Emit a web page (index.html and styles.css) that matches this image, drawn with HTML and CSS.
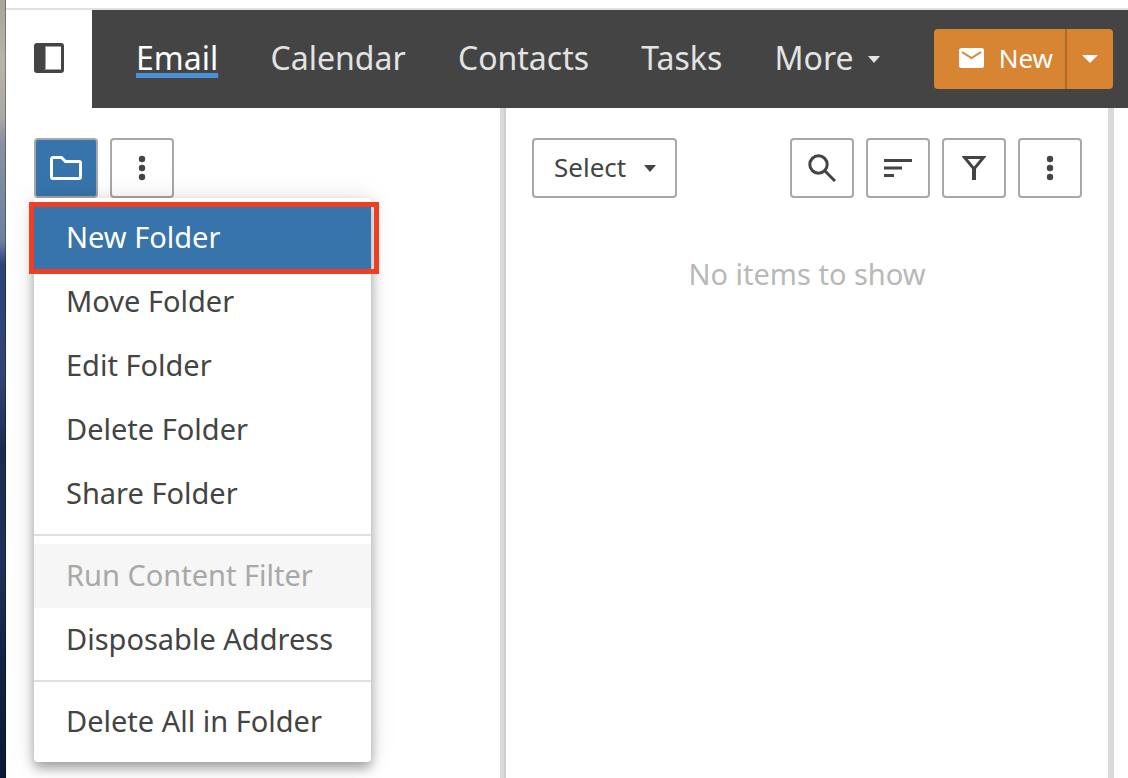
FILE: index.html
```html
<!DOCTYPE html>
<html lang="en">
<head>
    <meta charset="UTF-8">
    <meta name="viewport" content="width=device-width, initial-scale=1.0">
    <title>Email</title>
    <link rel="stylesheet" href="styles.css">
</head>
<body>
    <div class="desktop-edge"></div>
    <div class="app">
        <header class="header">
            <button class="sidebar-toggle" type="button" aria-label="Toggle sidebar">
                <svg width="30" height="30" viewBox="0 0 30 30">
                    <rect width="30" height="30" rx="3" fill="#444"/>
                    <rect x="11" y="3" width="16" height="24" fill="#a0a0a0"/>
                    <rect x="12" y="4" width="15" height="22" fill="#fff"/>
                </svg>
            </button>
            <div class="topbar">
                <nav class="tabs">
                    <a class="tab active" href="#">Email</a>
                    <a class="tab" href="#">Calendar</a>
                    <a class="tab" href="#">Contacts</a>
                    <a class="tab" href="#">Tasks</a>
                    <button class="tab more" type="button" aria-haspopup="true">More
                        <svg width="12" height="9" viewBox="0 0 12 9"><path d="M0 2h12L6 9z" fill="currentColor"/></svg>
                    </button>
                </nav>
                <div class="new-group">
                    <button class="new-button" type="button">
                        <svg width="25" height="20" viewBox="0 0 25 20">
                            <rect width="25" height="20" rx="2.5" fill="#fff"/>
                            <path d="M3 4l9.500 6L22 4" fill="none" stroke="#d78532" stroke-width="2"/>
                        </svg>
                        New
                    </button>
                    <button class="new-caret" type="button" aria-label="New options">
                        <svg width="16" height="8" viewBox="0 0 16 8"><path d="M0 0h16L8 8z" fill="#fff"/></svg>
                    </button>
                </div>
            </div>
        </header>

        <main class="panes">
            <section class="folders">
                <div class="toolbar">
                    <button class="tool selected" type="button" aria-label="Folder actions">
                        <svg width="32" height="24" viewBox="0 0 32 24">
                            <path d="M3 1.500h8.500l4 4H29a1.500 1.500 0 0 1 1.500 1.500v14a1.500 1.500 0 0 1-1.500 1.500H3A1.500 1.500 0 0 1 1.500 21V3A1.500 1.500 0 0 1 3 1.500z" fill="none" stroke="#fff" stroke-width="3"/>
                        </svg>
                    </button>
                    <button class="tool" type="button" aria-label="More actions">
                        <svg width="8" height="26" viewBox="0 0 8 26" fill="#444">
                            <circle cx="4" cy="4" r="3.200"/><circle cx="4" cy="13" r="3.200"/><circle cx="4" cy="22" r="3.200"/>
                        </svg>
                    </button>
                </div>
                <div class="menu" role="menu">
                    <button class="menu-item current" type="button" role="menuitem">New Folder</button>
                    <button class="menu-item" type="button" role="menuitem">Move Folder</button>
                    <button class="menu-item" type="button" role="menuitem">Edit Folder</button>
                    <button class="menu-item" type="button" role="menuitem">Delete Folder</button>
                    <button class="menu-item" type="button" role="menuitem">Share Folder</button>
                    <hr class="menu-line">
                    <button class="menu-item" type="button" role="menuitem" disabled>Run Content Filter</button>
                    <button class="menu-item" type="button" role="menuitem">Disposable Address</button>
                    <hr class="menu-line">
                    <button class="menu-item" type="button" role="menuitem">Delete All in Folder</button>
                </div>
            </section>

            <div class="splitter"></div>

            <section class="messages">
                <div class="toolbar">
                    <div class="select-box">
                        <select class="select" aria-label="Select messages">
                            <option>Select</option>
                        </select>
                        <svg class="select-caret" width="12" height="7" viewBox="0 0 12 7"><path d="M0 0h12L6 7z" fill="#444"/></svg>
                    </div>
                    <button class="tool" type="button" aria-label="Search">
                        <svg width="28" height="28" viewBox="0 0 28 28" fill="none" stroke="#444">
                            <circle cx="10.500" cy="10.500" r="8.700" stroke-width="3"/>
                            <path d="M16.500 16.500L27 27" stroke-width="3"/>
                        </svg>
                    </button>
                    <button class="tool" type="button" aria-label="Sort">
                        <svg width="28" height="18" viewBox="0 0 28 18" fill="#444">
                            <path d="M0 0h28v3H0zM0 7.500h18v3H0zM0 15h10v3H0z"/>
                        </svg>
                    </button>
                    <button class="tool" type="button" aria-label="Filter">
                        <svg width="24" height="24" viewBox="0 0 24 24" fill="none" stroke="#444" stroke-width="3">
                            <path d="M2.500 1.500h19L12 13z"/>
                            <path d="M12 12v12" stroke-width="4"/>
                        </svg>
                    </button>
                    <button class="tool" type="button" aria-label="More options">
                        <svg width="8" height="26" viewBox="0 0 8 26" fill="#444">
                            <circle cx="4" cy="4" r="3.200"/><circle cx="4" cy="13" r="3.200"/><circle cx="4" cy="22" r="3.200"/>
                        </svg>
                    </button>
                </div>
                <p class="empty">No items to show</p>
            </section>

            <div class="splitter right"></div>
        </main>
    </div>
</body>
</html>
```

FILE: styles.css
```css
* {
    box-sizing: border-box;
}
body {
    margin: 0;
    min-height: 100vh;
    display: flex;
    font-family: "Noto Sans", "Open Sans", sans-serif;
    font-size: 29px;
    color: #444;
    background-color: #fff;
}
button, select {
    font-family: inherit;
    color: inherit;
    margin: 0;
    padding: 0;
    border: none;
    background: none;
}
svg {
    display: block;
    flex: none;
}

/* strip of wallpaper beside the window */
.desktop-edge {
    width: 6px;
    border-right: 1px solid rgba(0, 0, 0, 0.3);
    background: linear-gradient(#aaa59b 0%, #b8b4a8 8%, #aaa9a5 15%, #8b92a2 18%, #6d7fa0 31%, #2c437c 34%, #334475 48%, #1b2c52 58%, #20305a 72%, #132345 85%, #0c1833 100%);
}
.app {
    flex: 1;
    min-width: 0;
    display: flex;
    flex-direction: column;
    padding-top: 8px;
}

.header {
    display: flex;
    height: 100px;
    border-top: 2px solid #e0e0e0;
}
.sidebar-toggle {
    width: 86px;
    display: flex;
    align-items: center;
    padding: 0 0 2px 28px;
}
.topbar {
    flex: 1;
    display: flex;
    align-items: center;
    padding: 0 15px 0 44px;
    background-color: #444;
}
.tabs {
    flex: 1;
    display: flex;
    justify-content: space-between;
    margin-right: 54px;
    padding-bottom: 2px;
}
.tab {
    font-size: 32px;
    line-height: 40px;
    color: #e3e3e3;
    text-decoration: none;
}
.tab.active {
    color: #fff;
    text-decoration: underline 5px #4a90d9;
    text-underline-offset: 3px;
    text-decoration-skip-ink: none;
}
.more {
    display: flex;
    align-items: center;
    gap: 14px;
}

.new-group {
    display: flex;
    height: 60px;
    border-radius: 4px;
    background-color: #d78532;
}
.new-button {
    display: flex;
    align-items: center;
    gap: 15px;
    padding: 0 12px 2px 25px;
    border-right: 2px solid #ae6b28;
    font-size: 26px;
    color: #fff;
}
.new-caret {
    width: 46px;
    display: flex;
    align-items: center;
    justify-content: center;
}

.panes {
    flex: 1;
    display: grid;
    grid-template-columns: 494px 6px 1fr 6px 14px;
}
.splitter {
    background-color: #d9d9d9;
    border-right: 2px solid #cfcfcf;
}
.splitter.right {
    border-right-color: #d9d9d9;
}
.folders {
    position: relative;
    padding: 30px 28px;
}
.messages {
    padding: 30px 26px;
}
.toolbar {
    display: flex;
    gap: 12px;
}
.tool {
    width: 64px;
    height: 60px;
    display: flex;
    align-items: center;
    justify-content: center;
    border: 2px solid #a8a8a8;
    border-radius: 4px;
}
.tool.selected {
    background-color: #3874ac;
}
.select-box {
    position: relative;
    margin-right: auto;
}
.select {
    appearance: none;
    width: 145px;
    height: 60px;
    padding: 0 20px 2px;
    border: 2px solid #a8a8a8;
    border-radius: 4px;
    font-size: 26px;
}
.select-caret {
    position: absolute;
    right: 21px;
    top: 27px;
    pointer-events: none;
}
.empty {
    margin: 56px 0 0;
    line-height: 40px;
    text-align: center;
    color: #b8b8b8;
}

.menu {
    position: absolute;
    top: 90px;
    left: 28px;
    width: 337px;
    padding: 8px 0;
    border-radius: 4px;
    background-color: #fff;
    box-shadow: 0 6px 12px rgba(0, 0, 0, 0.35), 0 0 28px rgba(0, 0, 0, 0.1);
}
.menu-item {
    display: block;
    width: 100%;
    height: 64px;
    padding: 0 0 4px 32px;
    font-size: 29px;
    text-align: left;
    white-space: nowrap;
}
.menu-item.current {
    position: relative;
    color: #fff;
    background-color: #3874ac;
}
.menu-item.current::after {
    content: "";
    position: absolute;
    inset: -4px -8px -4px -5px;
    border: 5px solid #ee3f24;
}
.menu-item:disabled {
    color: #a8a8a8;
    background-color: #f6f6f6;
}
.menu-line {
    margin: 8px 0;
    border: none;
    border-top: 2px solid #e0e0e0;
}
```
